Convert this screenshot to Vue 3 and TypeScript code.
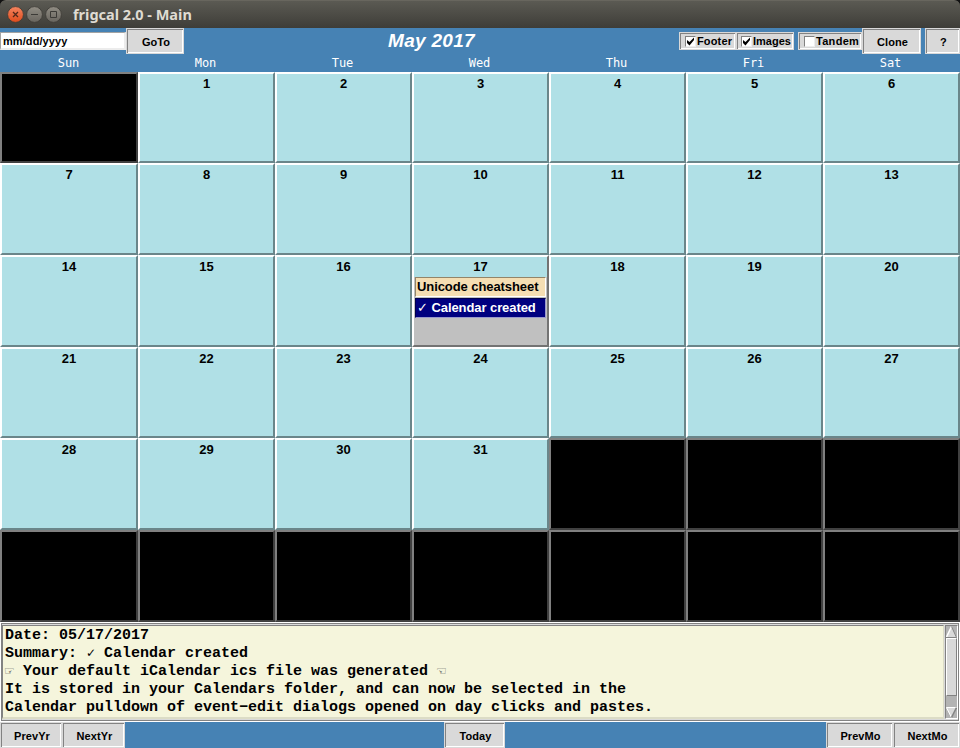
<script setup lang="ts">
interface Day { num: number | null; selected: boolean }

const weekdays: string[] = ['Sun', 'Mon', 'Tue', 'Wed', 'Thu', 'Fri', 'Sat']
const days: Day[] = Array.from({ length: 42 }, (_, i) => ({
  num: i >= 1 && i <= 31 ? i : null,
  selected: i === 17,
}))
const toggles = [
  { label: 'Footer', on: true, cls: 'footer-toggle' },
  { label: 'Images', on: true, cls: 'images-toggle' },
  { label: 'Tandem', on: false, cls: 'tandem-toggle' },
]
</script>

<template>
  <div class="window">
    <header class="titlebar">
      <svg class="controls" width="62" height="28" viewBox="0 0 62 28">
        <defs>
          <linearGradient id="close" x1="0" y1="0" x2="0" y2="1">
            <stop offset="0" stop-color="#f58560" /><stop offset="1" stop-color="#df4b1b" />
          </linearGradient>
          <linearGradient id="plain" x1="0" y1="0" x2="0" y2="1">
            <stop offset="0" stop-color="#918d84" /><stop offset="1" stop-color="#68655e" />
          </linearGradient>
        </defs>
        <circle cx="15.5" cy="14.5" r="7.9" fill="url(#close)" stroke="#3c3a35" stroke-width=".8" />
        <circle cx="34.5" cy="14.5" r="7.9" fill="url(#plain)" stroke="#3c3a35" stroke-width=".8" />
        <circle cx="53.5" cy="14.5" r="7.9" fill="url(#plain)" stroke="#3c3a35" stroke-width=".8" />
        <path d="M13 12l5 5M18 12l-5 5" stroke="#52281a" stroke-width="1.3" />
        <path d="M31 14.5h7M50.5 11.500h6v6h-6z" fill="none" stroke="#3c3b37" />
      </svg>
      <span class="title">frigcal 2.0 - Main</span>
    </header>

    <div class="toolbar">
      <div class="left">
        <div class="entry">mm/dd/yyyy</div>
        <button class="btn goto">GoTo</button>
      </div>
      <h1>May 2017</h1>
      <div class="right">
        <div v-for="t in toggles" :key="t.label" class="toggle" :class="t.cls">
          <span class="box">
            <svg v-if="t.on" width="9" height="9" viewBox="0 0 9 9"><path d="M1 3v3l2.500 2.500L8 3V0.500L3.500 5z" /></svg>
          </span>
          <span>{{ t.label }}</span>
        </div>
        <button class="btn clone">Clone</button>
        <button class="btn help">?</button>
      </div>
    </div>

    <div class="weekdays"><span v-for="w in weekdays" :key="w">{{ w }}</span></div>

    <main class="grid">
      <div v-for="(d, i) in days" :key="i" class="cell" :class="{ empty: d.num === null, selected: d.selected }">
        <div v-if="d.num !== null" class="num">{{ d.num }}</div>
        <template v-if="d.selected">
          <div class="event wheat">Unicode cheatsheet</div>
          <div class="event navy"><span class="tick">✓</span> Calendar created</div>
        </template>
      </div>
    </main>

    <section class="footer">
      <div class="note">
        <div>Date: 05/17/2017</div>
        <div>Summary: <i>✓</i> Calendar created</div>
        <div><i class="hand">☞</i> Your default iCalendar ics file was generated <i class="hand">☜</i></div>
        <div>It is stored in your Calendars folder, and can now be selected in the</div>
        <div>Calendar pulldown of event−edit dialogs opened on day clicks and pastes.</div>
      </div>
      <div class="scroll">
        <svg width="11" height="12" viewBox="0 0 11 12"><path d="M0 11.500L5.500 0L11 11.500z" fill="#d9d9d9" /><path d="M0.500 11L5.500 0.500" stroke="#fff" stroke-width="1.500" /><path d="M5.500 0.500L10.500 11.500H0" fill="none" stroke="#828282" /></svg>
        <div class="thumb"></div>
        <div class="gap"></div>
        <svg width="11" height="11" viewBox="0 0 11 11"><path d="M0 0.500H11L5.500 11z" fill="#d9d9d9" /><path d="M11 0.500H0.500L5.500 10.500" fill="none" stroke="#fff" /><path d="M10.500 0.500L5.500 10.500" stroke="#828282" stroke-width="1.500" /></svg>
      </div>
    </section>

    <nav class="bottom">
      <div class="pair"><button class="btn prevyr">PrevYr</button><button class="btn nextyr">NextYr</button></div>
      <button class="btn today">Today</button>
      <div class="pair end"><button class="btn prevmo">PrevMo</button><button class="btn nextmo">NextMo</button></div>
    </nav>
  </div>
</template>

<style>
body { background: #4682b4; overflow: hidden; }
</style>
<style scoped>
* { box-sizing: border-box; }
.window { width: 960px; height: 748px; background: linear-gradient(#111 0 20px, #4682b4 20px); display: flex; flex-direction: column; font: bold 11px "Liberation Sans", sans-serif; color: #000; overflow: hidden; }
.titlebar { height: 28px; flex: none; display: flex; align-items: center; background: linear-gradient(#5b5a53, #3e3d38); border-top: 1px solid #68665e; border-radius: 6px 6px 0 0; }
.controls { flex: none; margin-top: -1px; }
.title { margin: -2px 0 0 11px; font: bold 14.500px/20px "Noto Sans", sans-serif; color: #dfdbd2; white-space: nowrap; }
.toolbar { height: 26px; flex: none; display: flex; justify-content: space-between; position: relative; }
.left, .right, .pair { display: flex; }
.left, .right { align-items: center; }
.entry { width: 126px; height: 18px; padding-left: 2px; line-height: 17px; letter-spacing: 0.08px; background: #fff; border: 2px solid; border-color: #a3a3a3 #ececec #ececec #a3a3a3; border-left-width: 1px; border-top-width: 1px; }
.btn { font: inherit; color: #000; padding: 2px 0 0 2px; margin: 0; height: 26px; background: #d9d9d9; border: 1px solid #d9d9d9; border-radius: 0; box-shadow: inset 1px 1px #828282, inset -1px -1px #fff; text-align: center; line-height: 22px; letter-spacing: 0.08px; }
.goto { width: 58px; }
.clone { width: 59px; }
.help { width: 35px; margin-left: 4px; }
h1 { position: absolute; left: 388px; top: 0; margin: 0; font: italic bold 19px/26px "Liberation Sans", sans-serif; letter-spacing: 0.3px; color: #fff; white-space: nowrap; }
.toggle { display: flex; align-items: center; height: 18px; background: #d9d9d9; border: 1px solid #d9d9d9; box-shadow: inset 1px 1px #828282, inset -1px -1px #fff; padding-left: 5px; gap: 1px; white-space: nowrap; letter-spacing: 0.15px; }
.footer-toggle { width: 57px; }
.images-toggle { width: 58px; padding-left: 4px; letter-spacing: 0; }
.tandem-toggle { width: 64px; margin-left: 4px; letter-spacing: 0.3px; }
.box { width: 11px; height: 11px; background: #fff; border: 1px solid #828282; border-right-color: #eee; border-bottom-color: #eee; display: flex; flex: none; }
.weekdays { height: 18px; flex: none; display: grid; grid-template-columns: repeat(7, 137px); text-align: center; color: #fff; font: 12px/18px "DejaVu Sans Mono", monospace; }
.grid { flex: none; display: grid; grid-template-columns: 138px repeat(6, 137px); grid-template-rows: 91px 92px 92px 91px 92px 92px; }
.cell { background: #b0e0e6; border: 2px solid; border-color: #fff #6a868a #6a868a #fff; font-size: 13px; overflow: hidden; }
.empty { background: #000; border-color: #808080 #404040 #404040 #808080; }
.selected { background: #c0c0c0; border-color: #fff #737373 #737373 #fff; }
.num { height: 20px; line-height: 19px; text-align: center; background: #b0e0e6; }
.event { height: 20px; margin: 0 1px 1px; padding-left: 1px; line-height: 17px; border: 1px solid; white-space: nowrap; letter-spacing: -0.08px; }
.wheat { background: #f5deb3; border-color: #938569 #fff #fff #938569; }
.navy { background: #000080; color: #fff; border-color: #00004d #9999cc #9999cc #00004d; }
.tick { font-weight: normal; }
.footer { height: 100px; flex: none; display: flex; background: #d9d9d9; border: 1px solid #fff; box-shadow: inset 0 0 0 1px #828282; padding: 2px 1px; }
.note { flex: 1; background: #f5f5dc; border: 1px solid; border-color: #828282 #dcdcc6 #dcdcc6 #828282; border-bottom-width: 2px; padding: 1px 0 0 2px; font: bold 15px/18px "Liberation Mono", monospace; white-space: pre; }
.note div { height: 18px; }
.note i { display: inline-block; width: 9px; height: 18px; vertical-align: top; font: 12px/17px "DejaVu Sans", sans-serif; }
.note .hand { font-size: 12px; color: #444; text-indent: -1px; }
.scroll { width: 13px; margin-left: 1px; background: #b3b3b3; border: 1px solid; border-color: #828282 #fff #fff #828282; display: flex; flex-direction: column; flex: none; }
.scroll svg { flex: none; }
.thumb { height: 58px; background: #d9d9d9; border: 1px solid; border-color: #fff #828282 #828282 #fff; }
.gap { flex: 1; }
.bottom { height: 26px; flex: none; display: flex; }
.end { margin-left: auto; }
.prevyr { width: 62px; }
.nextyr { width: 63px; }
.today { width: 61px; margin-left: 319px; }
.prevmo, .nextmo { width: 67px; }
</style>
